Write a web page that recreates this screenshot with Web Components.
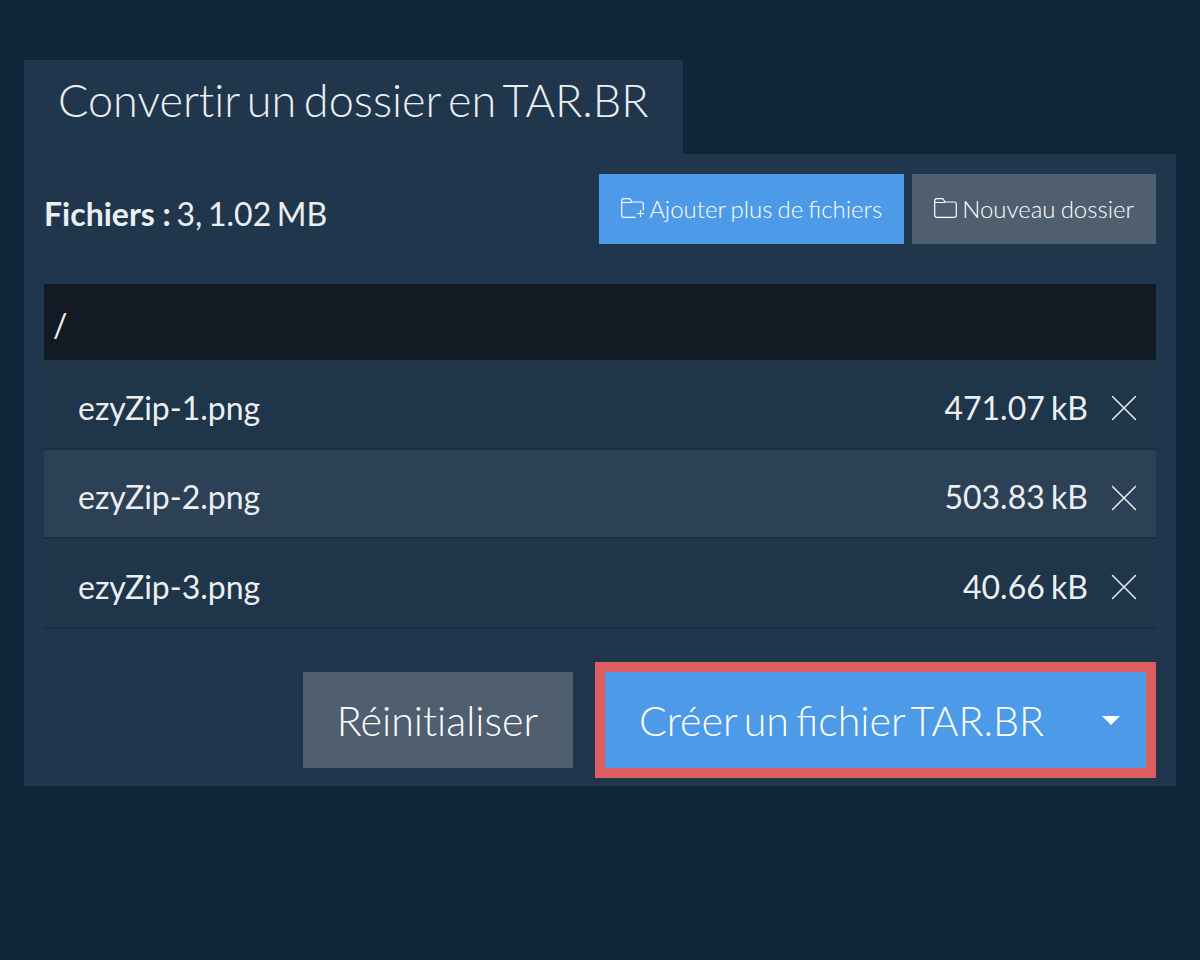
<!DOCTYPE html>
<html lang="fr">
<head>
<meta charset="UTF-8">
<title>Convertir un dossier en TAR.BR</title>
<style>
  html, body { margin: 0; background: #0f2539; }
  body { padding: 60px 24px 0; font-family: Lato, "Open Sans", sans-serif; color: #eceff1; }
  .nl { font-variant-ligatures: none; }
  b { word-spacing: 0; }
</style>
</head>
<body>
<convert-panel>
  <span slot="heading">Conver<span class="nl">ti</span>r un dossier en TAR.BR</span>
  <span slot="summary"><b>Fichiers :</b> 3, 1.02 MB</span>
  <tool-button slot="tools" kind="primary" icon="folder-plus">Ajouter plus de fichiers</tool-button>
  <tool-button slot="tools" icon="folder">Nouveau dossier</tool-button>
  <path-bar slot="list">/</path-bar>
  <file-row slot="list" name="ezyZip-1.png" size="471.07 kB"></file-row>
  <file-row slot="list" name="ezyZip-2.png" size="503.83 kB" alt></file-row>
  <file-row slot="list" name="ezyZip-3.png" size="40.66 kB"></file-row>
  <big-button slot="actions">Réini<span class="nl">ti</span>aliser</big-button>
  <big-button slot="actions" primary caret>Créer un fichier TAR.BR</big-button>
</convert-panel>

<script>
  const ICONS = {
    folder: '<path d="M.7 4.5V2.7a2 2 0 0 1 2-2h6l2.5 3.3h9.1a2 2 0 0 1 2 2v11.3a2 2 0 0 1-2 2H2.7a2 2 0 0 1-2-2z"/><path d="M.7 4.5H10.5"/>',
    'folder-plus': '<path d="M14 19.3H2.7a2 2 0 0 1-2-2V2.7a2 2 0 0 1 2-2h6l2.5 3.3h9.1a2 2 0 0 1 2 2v6"/><path d="M.7 4.5H10.5"/><path d="M19.5 12.5v6M16.5 15.5h6"/>'
  };

  class ConvertPanel extends HTMLElement {
    constructor() {
      super();
      this.attachShadow({ mode: 'open' });
      this.shadowRoot.innerHTML = `
        <style>
          :host { display: block; width: 1152px; }
          .tab {
            box-sizing: border-box; height: 94px; width: 659px;
            padding: 0 34px; background: #20364d;
            font-size: 45px; font-weight: 300; line-height: 81px; white-space: nowrap;
            word-spacing: -0.103em;
          }
          .panel { background: #20364d; height: 632px; box-sizing: border-box; padding: 20px; }
          .top { display: flex; align-items: center; height: 70px; }
          .summary { flex: 1; font-size: 32px; padding-top: 8px; word-spacing: -0.08em; }
          .tools { display: flex; gap: 8px; }
          .list { margin-top: 40px; }
          .actions { display: flex; justify-content: flex-end; align-items: center; gap: 22px; margin-top: 33px; }
        </style>
        <div class="tab"><slot name="heading"></slot></div>
        <div class="panel">
          <div class="top">
            <div class="summary"><slot name="summary"></slot></div>
            <div class="tools"><slot name="tools"></slot></div>
          </div>
          <div class="list"><slot name="list"></slot></div>
          <div class="actions"><slot name="actions"></slot></div>
        </div>
      `;
    }
  }

  class ToolButton extends HTMLElement {
    constructor() {
      super();
      this.attachShadow({ mode: 'open' });
      this.shadowRoot.innerHTML = `
        <style>
          :host {
            display: flex; align-items: center; justify-content: center; height: 70px;
            box-sizing: border-box; padding: 0 22px 2px; background: #4f5f6f; color: #fff;
            font-size: 24px; font-weight: 300; white-space: nowrap; word-spacing: -0.06em;
          }
          :host([kind="primary"]) { background: #4d9ae8; }
          svg { width: 23px; height: 20px; margin-right: 5px; fill: none; stroke: #fff; stroke-width: 1.2; stroke-linejoin: round; stroke-linecap: round; }
        </style>
        <svg viewBox="0 0 23 20">${ICONS[this.getAttribute('icon')]}</svg><slot></slot>
      `;
    }
  }

  class PathBar extends HTMLElement {
    constructor() {
      super();
      this.attachShadow({ mode: 'open' });
      this.shadowRoot.innerHTML = `
        <style>
          :host {
            display: flex; align-items: center; height: 76px; box-sizing: border-box;
            padding: 5px 9px 0; background: #121a23; font-size: 32px;
          }
        </style>
        <slot></slot>
      `;
    }
  }

  class FileRow extends HTMLElement {
    constructor() {
      super();
      this.attachShadow({ mode: 'open' });
      this.shadowRoot.innerHTML = `
        <style>
          :host {
            display: flex; align-items: center; height: 90px; box-sizing: border-box;
            padding: 6px 19px 0 34px; background: #1f3549; font-size: 32px;
            border-bottom: 2px solid #1b2f42; word-spacing: -0.06em;
          }
          :host([alt]) { background: #2c4056; height: 89px; }
          .name { flex: 1; }
          svg { width: 26px; height: 26px; margin: 2px 0 0 23px; fill: none; stroke: #eceff1; stroke-width: 1.5; stroke-linecap: round; }
        </style>
        <span class="name"></span><span class="size"></span>
        <svg viewBox="0 0 26 26"><path d="M1.5 1.5l23 23M24.5 1.5l-23 23"/></svg>
      `;
      this.shadowRoot.querySelector('.name').textContent = this.getAttribute('name');
      this.shadowRoot.querySelector('.size').textContent = this.getAttribute('size');
    }
  }

  class BigButton extends HTMLElement {
    constructor() {
      super();
      this.attachShadow({ mode: 'open' });
      this.shadowRoot.innerHTML = `
        <style>
          :host {
            display: flex; align-items: center; box-sizing: border-box; height: 96px;
            padding: 0 35px 0 34px; background: #4f5f6f; color: #fff;
            font-size: 41.2px; font-weight: 300; white-space: nowrap; word-spacing: -0.1em;
          }
          :host([primary]) {
            background: #4d9ae8; width: 561px; height: 116px; padding: 0 34px;
            border: 10px solid #dc5e5e;
          }
          .caret { display: none; margin-left: auto; width: 0; height: 0; margin-right: -8px;
            border-left: 9px solid transparent; border-right: 9px solid transparent; border-top: 9px solid #fff; }
          :host([caret]) .caret { display: block; }
        </style>
        <slot></slot><span class="caret"></span>
      `;
    }
  }

  customElements.define('convert-panel', ConvertPanel);
  customElements.define('tool-button', ToolButton);
  customElements.define('path-bar', PathBar);
  customElements.define('file-row', FileRow);
  customElements.define('big-button', BigButton);
</script>
</body>
</html>
